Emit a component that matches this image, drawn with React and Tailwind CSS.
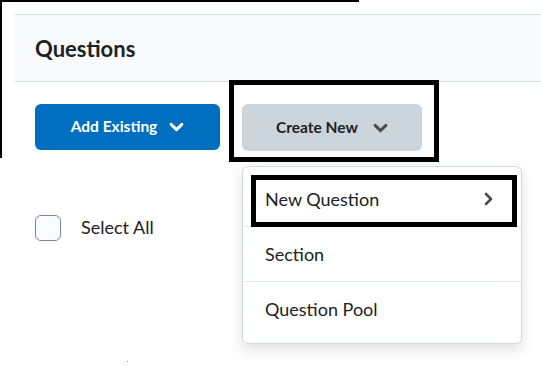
import React from 'react';

const ChevronDown = ({ className }) => (
  <svg viewBox="0 0 14 9" className={className} fill="none">
    <path d="M2 2l5 5 5-5" stroke="currentColor" strokeWidth="2.8" strokeLinecap="round" strokeLinejoin="round" />
  </svg>
);

const ChevronRight = ({ className }) => (
  <svg viewBox="0 0 9 14" className={className} fill="none">
    <path d="M2 2l5 5-5 5" stroke="currentColor" strokeWidth="2.6" strokeLinecap="round" strokeLinejoin="round" />
  </svg>
);

const MenuItem = ({ label, arrow, last }) => (
  <div className={`flex items-center justify-between h-[55px] pl-[22px] pr-[28px] ${last ? '' : 'border-b border-[#e3e9f1]'}`}>
    <span className="text-[18px] text-[#202122]">{label}</span>
    {arrow && <ChevronRight className="w-[9px] h-[14px] text-[#494c4e]" />}
  </div>
);

export default function App() {
  return (
    <div
      className="relative w-[541px] h-[380px] bg-white overflow-hidden"
      style={{ fontFamily: 'Lato, "Noto Sans", sans-serif' }}
    >
      {/* crop edges from the original capture */}
      <div className="absolute left-0 top-0 w-[359px] h-[2px] bg-black" />
      <div className="absolute left-0 top-0 w-[2px] h-[158px] bg-black" />

      <div className="pt-[14px] pl-[15px]">
        <div className="h-[68px] bg-[#f9fafc] border-y border-[#d3d9e3] flex items-center pl-[20px]">
          <h1 className="text-[22px] font-bold text-[#202122] mt-[1px]">Questions</h1>
        </div>
      </div>

      <div className="flex gap-[22px] pl-[35px] mt-[22px]">
        <button className="w-[185px] h-[46px] rounded-[6px] bg-[#006fbf] text-white text-[15.5px] font-bold flex items-center justify-center gap-[12px]">
          <span>Add Existing</span>
          <ChevronDown className="w-[15px] h-[10px]" />
        </button>
        <button className="w-[180px] h-[47px] rounded-[6px] bg-[#cdd5dc] text-[#202122] text-[15.5px] font-bold flex items-center justify-center gap-[15px]">
          <span>Create New</span>
          <ChevronDown className="w-[15px] h-[10px] text-[#494c4e]" />
        </button>
      </div>

      <div className="flex items-center gap-[20px] pl-[35px] mt-[63px]">
        <div className="w-[26px] h-[26px] rounded-[6px] border border-[#7c8695] bg-[#f9fbff]" />
        <span className="text-[18px] text-[#202122]">Select All</span>
      </div>

      {/* dropdown menu */}
      <div className="absolute left-[242px] top-[166px] w-[280px] pt-[5px] pb-[6px] bg-white rounded-[6px] border border-[#d3d9e3] shadow-[0_6px_14px_rgba(0,0,0,0.12)]">
        <MenuItem label="New Question" arrow />
        <MenuItem label="Section" />
        <MenuItem label="Question Pool" last />
      </div>

      {/* annotation boxes */}
      <div className="absolute left-[229px] top-[80px] w-[210px] h-[82px] border-[5px] border-black" />
      <div className="absolute left-[251px] top-[175px] w-[266px] h-[52px] border-[5px] border-black" />

      <div className="absolute left-[127px] top-[361px] w-[1px] h-[1px] bg-[#888]" />
    </div>
  );
}
